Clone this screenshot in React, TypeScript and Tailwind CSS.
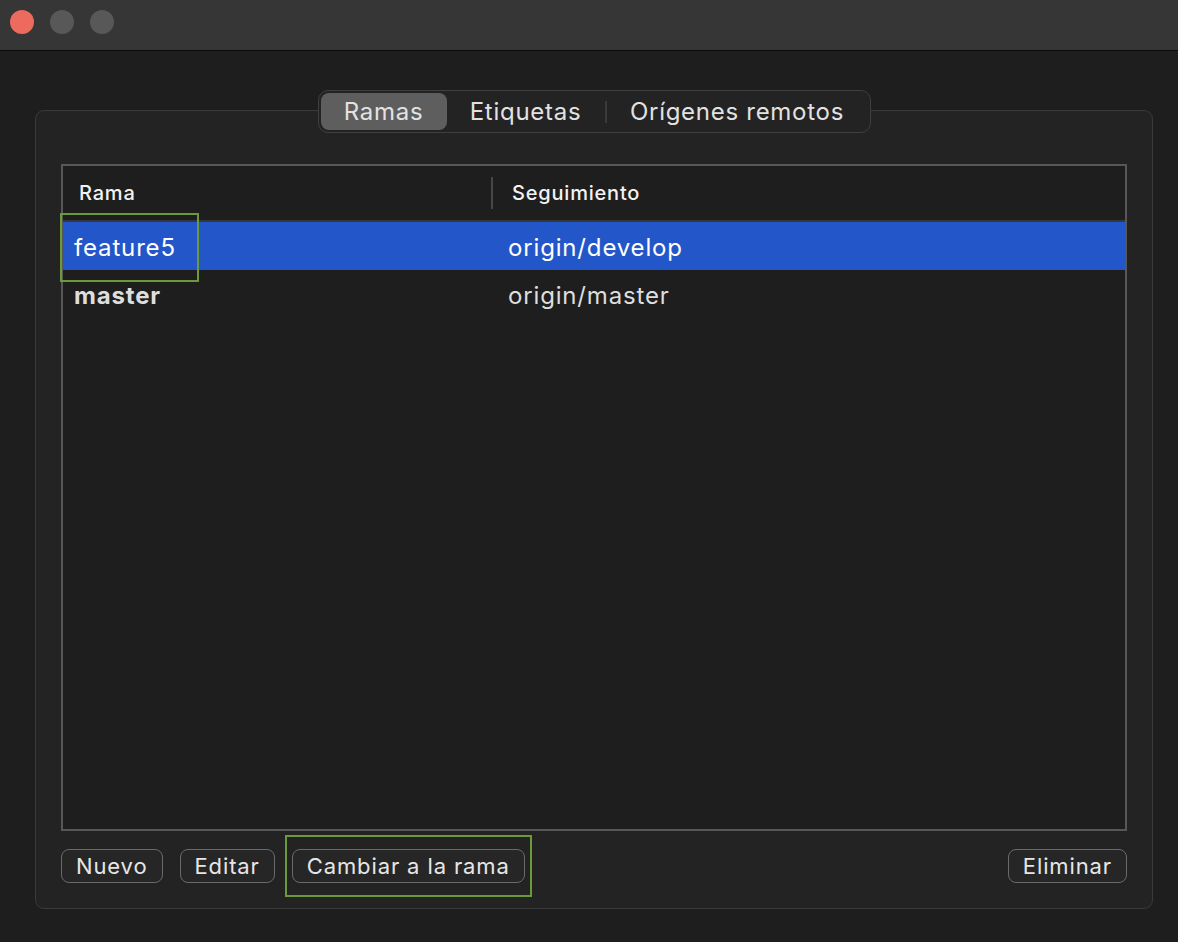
import React from "react";

const font = { fontFamily: "Inter, 'Noto Sans', 'Liberation Sans', sans-serif" };

type Branch = { name: string; tracking: string; current?: boolean };

const branches: Branch[] = [
  { name: "feature5", tracking: "origin/develop" },
  { name: "master", tracking: "origin/master", current: true },
];

function Button({ label, highlight }: { label: string; highlight?: boolean }) {
  return (
    <div className="relative">
      <button className="h-[34px] px-[14px] rounded-[8px] border-[1.5px] border-[#6a6a6a] bg-[#262626] text-[22px] leading-none tracking-[0.04em] text-[#e6e6e6]">
        {label}
      </button>
      {highlight && (
        <div className="absolute -left-[7px] -right-[7px] -top-[14px] -bottom-[14px] border-2 border-[#6b9a3c] pointer-events-none" />
      )}
    </div>
  );
}

export default function App() {
  return (
    <div className="w-[1178px] h-[942px] bg-[#1e1e1e] flex flex-col overflow-hidden" style={font}>
      {/* title bar */}
      <div className="h-[51px] shrink-0 bg-[#363636] border-b border-[#0c0c0c] flex items-start gap-4 pl-[10px] pt-[10px]">
        <span className="w-6 h-6 rounded-full bg-[#ec6a5e]" />
        <span className="w-6 h-6 rounded-full bg-[#585858]" />
        <span className="w-6 h-6 rounded-full bg-[#585858]" />
      </div>

      {/* group box */}
      <div className="mt-[59px] ml-[35px] mr-[25px] h-[799px] rounded-[9px] border-[1.5px] border-[#3a3a3a] bg-[#232323] flex flex-col px-[25px]">
        <div className="-mt-[21px] self-center flex items-center h-[43px] w-[553px] rounded-[10px] border border-[#3f3f3f] bg-[#232323] p-[2px] text-[24px] tracking-[0.03em] text-[#e2e2e2]">
          <div className="h-full w-[126px] rounded-[8px] bg-[#5e5e5e] flex items-center justify-center">Ramas</div>
          <div className="h-full w-[158px] flex items-center justify-center">Etiquetas</div>
          <div className="w-[2px] h-[22px] bg-[#3a3a3a]" />
          <div className="h-full flex-1 flex items-center justify-center">Orígenes remotos</div>
        </div>

        {/* table */}
        <div className="mt-[31px] h-[667px] border-2 border-[#575757] bg-[#1e1e1e] flex flex-col">
          <div className="h-[56px] shrink-0 flex items-center border-b-2 border-[#383838] text-[20px] font-medium tracking-[0.04em] text-[#f2f2f2]">
            <div className="w-[428px] pl-[16px]">Rama</div>
            <div className="w-[2px] h-[32px] bg-[#474747]" />
            <div className="pl-[19px]">Seguimiento</div>
          </div>
          {branches.map((b, i) => (
            <div
              key={b.name}
              className={`relative h-[48px] shrink-0 flex items-center pt-[3px] text-[24px] tracking-[0.035em] ${
                i === 0 ? "bg-[#2357c9] text-white" : "text-[#dedede]"
              }`}
            >
              <div className={`w-[430px] pl-[11px] ${b.current ? "font-bold" : ""}`}>{b.name}</div>
              <div className="pl-[15px]">{b.tracking}</div>
              {i === 0 && (
                <div className="absolute -left-[3px] top-[-9px] w-[139px] h-[69px] border-2 border-[#6b9a3c]" />
              )}
            </div>
          ))}
        </div>

        {/* buttons */}
        <div className="mt-[18px] flex items-center gap-[17px]">
          <Button label="Nuevo" />
          <Button label="Editar" />
          <Button label="Cambiar a la rama" highlight />
          <div className="flex-1" />
          <Button label="Eliminar" />
        </div>
      </div>
    </div>
  );
}
